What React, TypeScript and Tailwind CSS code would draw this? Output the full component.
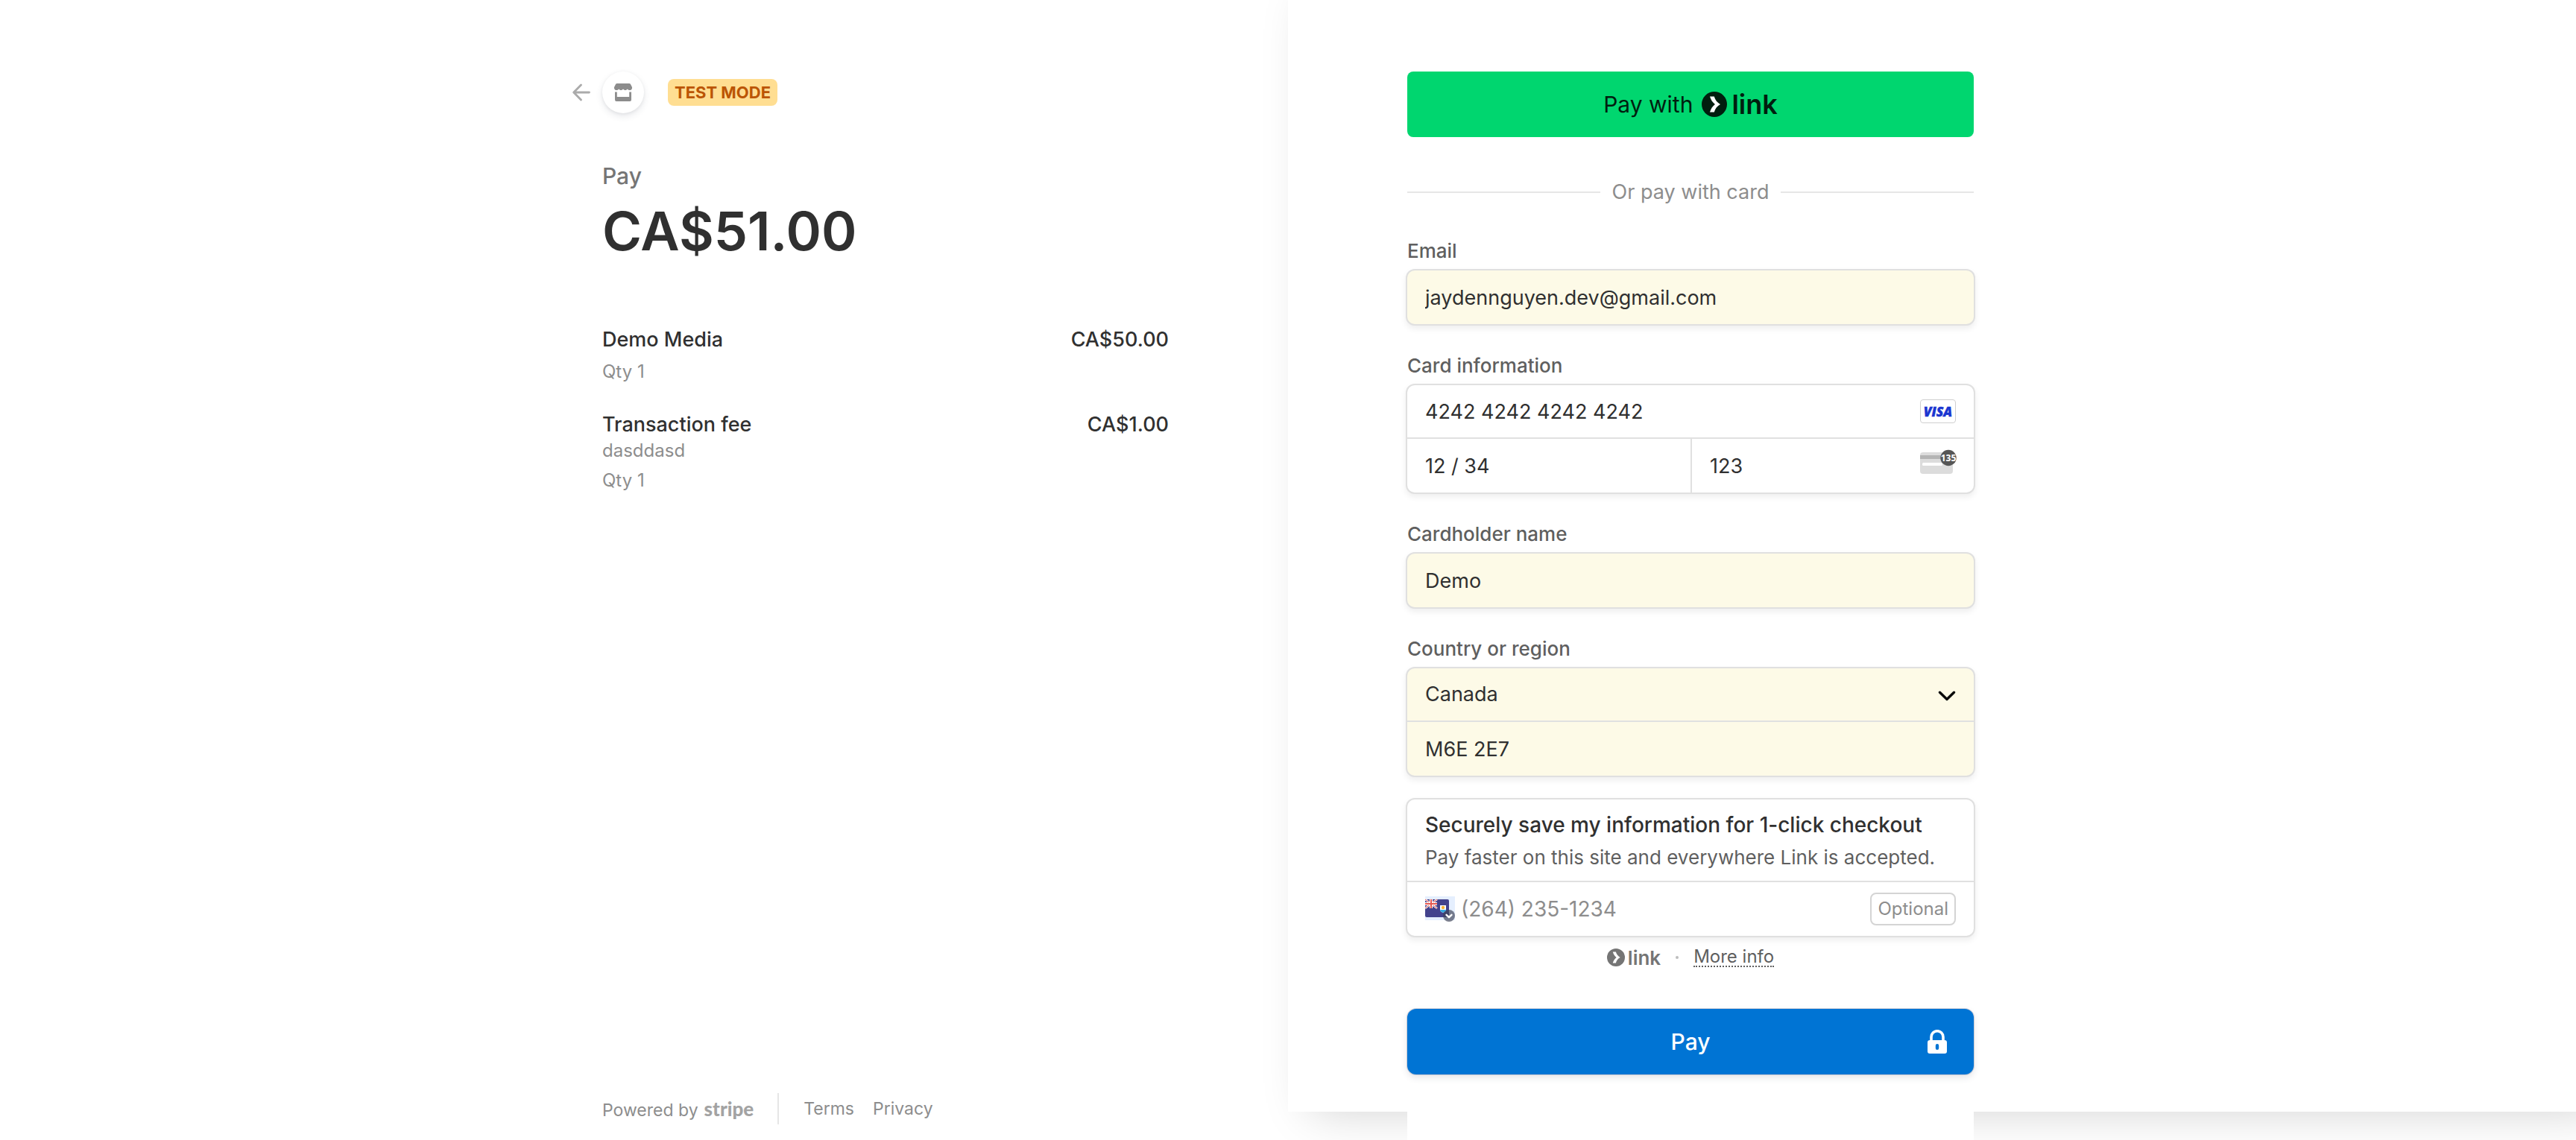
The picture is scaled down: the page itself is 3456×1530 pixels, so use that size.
import type { ReactNode } from 'react';

const items = [
  { name: 'Demo Media', description: '', quantity: 1, price: 'CA$50.00' },
  { name: 'Transaction fee', description: 'dasddasd', quantity: 1, price: 'CA$1.00' },
];

const countries = ['Canada', 'United States', 'United Kingdom', 'Australia'];

const boxClass =
  'rounded-[10px] shadow-[0_0_0_2px_#e0e0e0,0_4px_8px_2px_rgba(0,0,0,0.07)]';
const inputClass =
  'block h-[72px] w-full min-w-0 bg-transparent px-6 text-[27px] text-[#303030] outline-none';
const shortInputClass =
  'block h-[70px] w-full min-w-0 bg-transparent px-6 text-[27px] text-[#303030] outline-none';
const labelClass = 'mb-2.5 block text-[26px] leading-8 font-medium text-[#5f5f5f]';

function LinkMark({ className }: { className: string }) {
  return (
    <svg viewBox="0 0 34 34" className={className} aria-hidden="true">
      <circle cx="17" cy="17" r="17" fill="currentColor" />
      <path d="M11 6.500h5.800c1.200 4.600 4.200 8.400 8.200 10.500-4 2.100-7 5.900-8.200 10.500H11c1.200-4.300 3.600-7.900 6.900-10.500C14.600 14.400 12.200 10.800 11 6.500z" fill="#fff" />
    </svg>
  );
}

function ShopIcon() {
  return (
    <svg viewBox="0 0 24 24" className="size-6" fill="#8c8c8c" aria-hidden="true">
      <path d="M4 0h16c1 0 1.700.4 2.100 1.200L24 5v1.200A3.200 3.200 0 0 1 20.800 9c-1.500 0-2.400-.6-3-1.500C17.200 8.400 16.100 9 14.900 9s-2.300-.6-2.900-1.500C11.400 8.400 10.300 9 9.100 9s-2.300-.6-2.900-1.500C5.600 8.400 4.700 9 3.200 9A3.200 3.200 0 0 1 0 6.200V5l1.900-3.800C2.300.4 3 0 4 0z" />
      <path d="M1 11.300c.8.300 1.800.3 2.800 0V18h16.400v-6.700c1 .3 2 .3 2.800 0V22a2 2 0 0 1-2 2H3a2 2 0 0 1-2-2z" />
    </svg>
  );
}

function BackArrow() {
  return (
    <svg viewBox="0 0 24 24" className="size-6" fill="none" stroke="#ababab" strokeWidth="2.800" strokeLinecap="round" strokeLinejoin="round" aria-hidden="true">
      <path d="M22.500 12H2M11.500 2 1.700 12l9.800 10" />
    </svg>
  );
}

function VisaIcon() {
  return (
    <svg viewBox="0 0 48 32" className="h-8 w-12" aria-label="Visa" role="img">
      <rect x=".5" y=".5" width="47" height="31" rx="3.500" fill="#fff" stroke="#cfcfcf" />
      <text x="24" y="22.500" textAnchor="middle" fontFamily="'Open Sans', 'Noto Sans', sans-serif" fontWeight="800" fontStyle="italic" fontSize="17.500" fill="#1a35d0" stroke="#1a35d0" strokeWidth=".5">
        VISA
      </text>
    </svg>
  );
}

function CvcIcon() {
  return (
    <svg viewBox="0 0 50 34" className="h-[34px] w-[50px]" aria-hidden="true">
      <rect x="1" y="4" width="44" height="29" rx="4" fill="#dcdcdc" />
      <rect x="1" y="8" width="44" height="5" fill="#b4b4b4" />
      <rect x="4" y="18" width="27" height="4" rx="1.500" fill="#fff" />
      <circle cx="39" cy="11.500" r="10.700" fill="#565656" />
      <text x="39" y="15.800" textAnchor="middle" fontFamily="'Open Sans', 'Noto Sans', sans-serif" fontWeight="700" fontSize="12" fill="#fff">
        135
      </text>
    </svg>
  );
}

function FlagIcon() {
  return (
    <svg viewBox="0 0 40 34" className="h-[34px] w-10" aria-hidden="true">
      <rect width="40" height="32" fill="#e5effe" />
      <rect y="4" width="32" height="24" rx="2" fill="#43428c" />
      <path d="M0 4l16 12M16 4 0 16" stroke="#fff" strokeWidth="2.400" />
      <path d="M0 4l16 12M16 4 0 16" stroke="#e5574f" strokeWidth="1" />
      <path d="M8 4v12M0 10h16" stroke="#fff" strokeWidth="4" />
      <path d="M8 4v12M0 10h16" stroke="#e5574f" strokeWidth="2" />
      <path d="M20 12h8v6c0 2-2 3.300-4 4-2-.7-4-2-4-4z" fill="#fff" />
      <path d="M20 18h8c0 2-2 3.300-4 4-2-.7-4-2-4-4z" fill="#36a9e1" />
      <circle cx="24" cy="15" r="2.200" fill="#f9b233" />
      <circle cx="32" cy="26" r="8" fill="#3c4257" fillOpacity=".68" />
      <path d="M28.500 24.800 32 28.200l3.500-3.400" fill="none" stroke="#fff" strokeWidth="2.400" strokeLinecap="round" strokeLinejoin="round" />
    </svg>
  );
}

function LockIcon() {
  return (
    <svg viewBox="0 0 26 32" className="h-8 w-[26px]" aria-hidden="true">
      <path d="M5 15V9.700a8 8 0 0 1 16 0V15" fill="none" stroke="#fff" strokeWidth="3.600" />
      <path fillRule="evenodd" fill="#fff" d="M3 14h20a3 3 0 0 1 3 3v12a3 3 0 0 1-3 3H3a3 3 0 0 1-3-3V17a3 3 0 0 1 3-3zm10 5a2.200 2.200 0 0 0-2.200 2.200v3.600a2.200 2.200 0 0 0 4.400 0v-3.600A2.200 2.200 0 0 0 13 19z" />
    </svg>
  );
}

function Summary() {
  return (
    <section className="flex min-h-screen flex-1 justify-end pr-40">
      <div className="flex w-full max-w-[760px] flex-col pt-24 pb-5">
        <header className="-ml-10 flex h-14 items-center">
          <a href="#back" aria-label="Back" className="mr-4">
            <BackArrow />
          </a>
          <div className="flex size-14 items-center justify-center rounded-full bg-white shadow-[0_4px_10px_rgba(60,66,87,0.12),0_1px_4px_rgba(0,0,0,0.06)]">
            <ShopIcon />
          </div>
          <span className="ml-8 flex h-9 items-center rounded-lg bg-[#ffde92] px-[9px] text-[22px] font-bold text-[#bb5504]">
            TEST MODE
          </span>
        </header>

        <h1 className="mt-16">
          <span className="block text-[30px] leading-10 font-medium text-[#757575]">Pay</span>
          <span className="mt-2.5 block text-7xl leading-[88px] font-semibold text-[#303030]">CA$51.00</span>
        </h1>

        <ul className="mt-[83px] flex flex-col gap-9">
          {items.map((item) => (
            <li key={item.name} className="flex justify-between">
              <div>
                <p className="text-[27px] leading-[38px] font-medium text-[#303030]">{item.name}</p>
                {item.description && <p className="text-2xl text-[#8d8d8d]">{item.description}</p>}
                <p className="mt-2 text-2xl text-[#8d8d8d]">Qty {item.quantity}</p>
              </div>
              <p className="text-[27px] leading-[38px] font-medium text-[#303030]">{item.price}</p>
            </li>
          ))}
        </ul>

        <footer className="mt-auto flex h-11 items-center text-[23px] text-[#8d8d8d]">
          <a href="#stripe" className="flex items-baseline gap-2">
            Powered by <span className="font-[Lato] text-[26px] font-black text-[#a3a3a3]">stripe</span>
          </a>
          <span className="ml-8 h-[42px] w-0.5 bg-[#e6e6e6]" />
          <a href="#terms" className="ml-[33px]">Terms</a>
          <a href="#privacy" className="ml-[25px]">Privacy</a>
        </footer>
      </div>
    </section>
  );
}

function Field({ id, label, children }: { id: string; label: string; children: ReactNode }) {
  return (
    <div>
      <label htmlFor={id} className={labelClass}>
        {label}
      </label>
      {children}
    </div>
  );
}

function PaymentForm() {
  return (
    <section className="h-[calc(100vh-38px)] flex-1 bg-white pl-40 shadow-[30px_0_60px_rgba(0,0,0,0.18)]">
      <form className="min-h-screen w-full max-w-[760px] bg-white pt-24">
        <button type="button" className="flex h-[88px] w-full items-center justify-center rounded-lg bg-[#00d66f] text-[30px] text-[#011e0f]">
          Pay with
          <LinkMark className="ml-3 size-[34px]" />
          <span className="ml-1.5 text-4xl font-semibold">link</span>
        </button>

        <div className="mt-14 flex items-center gap-4 text-[27px] leading-9 text-[#8d8d8d]">
          <span className="h-0.5 flex-1 bg-[#e6e6e6]" />
          Or pay with card
          <span className="h-0.5 flex-1 bg-[#e6e6e6]" />
        </div>

        <div className="mt-[45px] flex flex-col gap-10">
          <Field id="email" label="Email">
            <div className={`${boxClass} bg-[#fdfae7]`}>
              <input id="email" type="email" defaultValue="jaydennguyen.dev@gmail.com" className={inputClass} />
            </div>
          </Field>

          <Field id="card-number" label="Card information">
            <div className={`${boxClass} bg-white`}>
              <div className="relative border-b-2 border-[#e0e0e0]">
                <input id="card-number" defaultValue="4242 4242 4242 4242" className={shortInputClass} />
                <span className="absolute inset-y-0 right-6 flex items-center">
                  <VisaIcon />
                </span>
              </div>
              <div className="grid grid-cols-2">
                <input aria-label="Expiry date" defaultValue="12 / 34" className={inputClass} />
                <div className="relative border-l-2 border-[#e0e0e0]">
                  <input aria-label="CVC" defaultValue="123" className={inputClass} />
                  <span className="absolute top-3.5 right-[23px]">
                    <CvcIcon />
                  </span>
                </div>
              </div>
            </div>
          </Field>

          <Field id="cardholder" label="Cardholder name">
            <div className={`${boxClass} bg-[#fdfae7]`}>
              <input id="cardholder" defaultValue="Demo" className={inputClass} />
            </div>
          </Field>

          <Field id="country" label="Country or region">
            <div className={`${boxClass} bg-[#fdfae7]`}>
              <div className="relative border-b-2 border-[#e0e0e0]">
                <select id="country" defaultValue="Canada" className={`${shortInputClass} appearance-none`}>
                  {countries.map((country) => (
                    <option key={country}>{country}</option>
                  ))}
                </select>
                <svg viewBox="0 0 24 14" className="pointer-events-none absolute top-[30px] right-6 h-3.5 w-6" fill="none" stroke="#0a0a0a" strokeWidth="3.400" strokeLinecap="round" strokeLinejoin="round" aria-hidden="true">
                  <path d="M2.500 2.300 12 11.500l9.500-9.200" />
                </svg>
              </div>
              <input aria-label="Postal code" defaultValue="M6E 2E7" className={inputClass} />
            </div>
          </Field>
        </div>

        <div className={`${boxClass} mt-8 bg-white`}>
          <div className="border-b-2 border-[#e0e0e0] px-6 pt-4 pb-[15px]">
            <p className="text-[28px] leading-9 font-medium text-[#303030]">
              Securely save my information for 1-click checkout
            </p>
            <p className="mt-2.5 text-[26px] leading-8 text-[#5f5f5f]">
              Pay faster on this site and everywhere Link is accepted.
            </p>
          </div>
          <div className="flex h-[72px] items-center px-6">
            <button type="button" aria-label="Phone country" className="mr-2">
              <FlagIcon />
            </button>
            <input aria-label="Phone number" type="tel" placeholder="(264) 235-1234" className="h-[70px] min-w-0 flex-1 bg-transparent text-[28px] outline-none placeholder:text-[#8d8d8d]" />
            <span className="flex h-11 items-center rounded-lg border-2 border-[#d4d4d4] px-2 text-2xl text-[#8d8d8d]">
              Optional
            </span>
          </div>
        </div>

        <div className="mt-[13px] flex h-8 items-center justify-center text-[#757575]">
          <LinkMark className="size-6" />
          <span className="ml-1 text-[26px] font-semibold">link</span>
          <span className="mx-5 size-1 rounded-full bg-[#bdbdbd]" />
          <a href="#more" className="border-b-2 border-dotted border-[#5f5f5f] text-2xl leading-6 text-[#5f5f5f]">
            More info
          </a>
        </div>

        <button
          type="submit"
          className="mt-[53px] grid h-[88px] w-full grid-cols-[1fr_auto_1fr] items-center rounded-xl bg-[#0074d4] px-9 text-[30px] font-medium text-white shadow-[0_0_0_1px_rgba(50,50,93,0.2),0_4px_10px_rgba(60,66,87,0.14)]"
        >
          <span className="col-start-2">Pay</span>
          <span className="justify-self-end">
            <LockIcon />
          </span>
        </button>
      </form>
    </section>
  );
}

export default function App() {
  return (
    <main className="flex min-h-screen overflow-hidden bg-white font-['Inter','Liberation_Sans',sans-serif]">
      <Summary />
      <PaymentForm />
    </main>
  );
}
